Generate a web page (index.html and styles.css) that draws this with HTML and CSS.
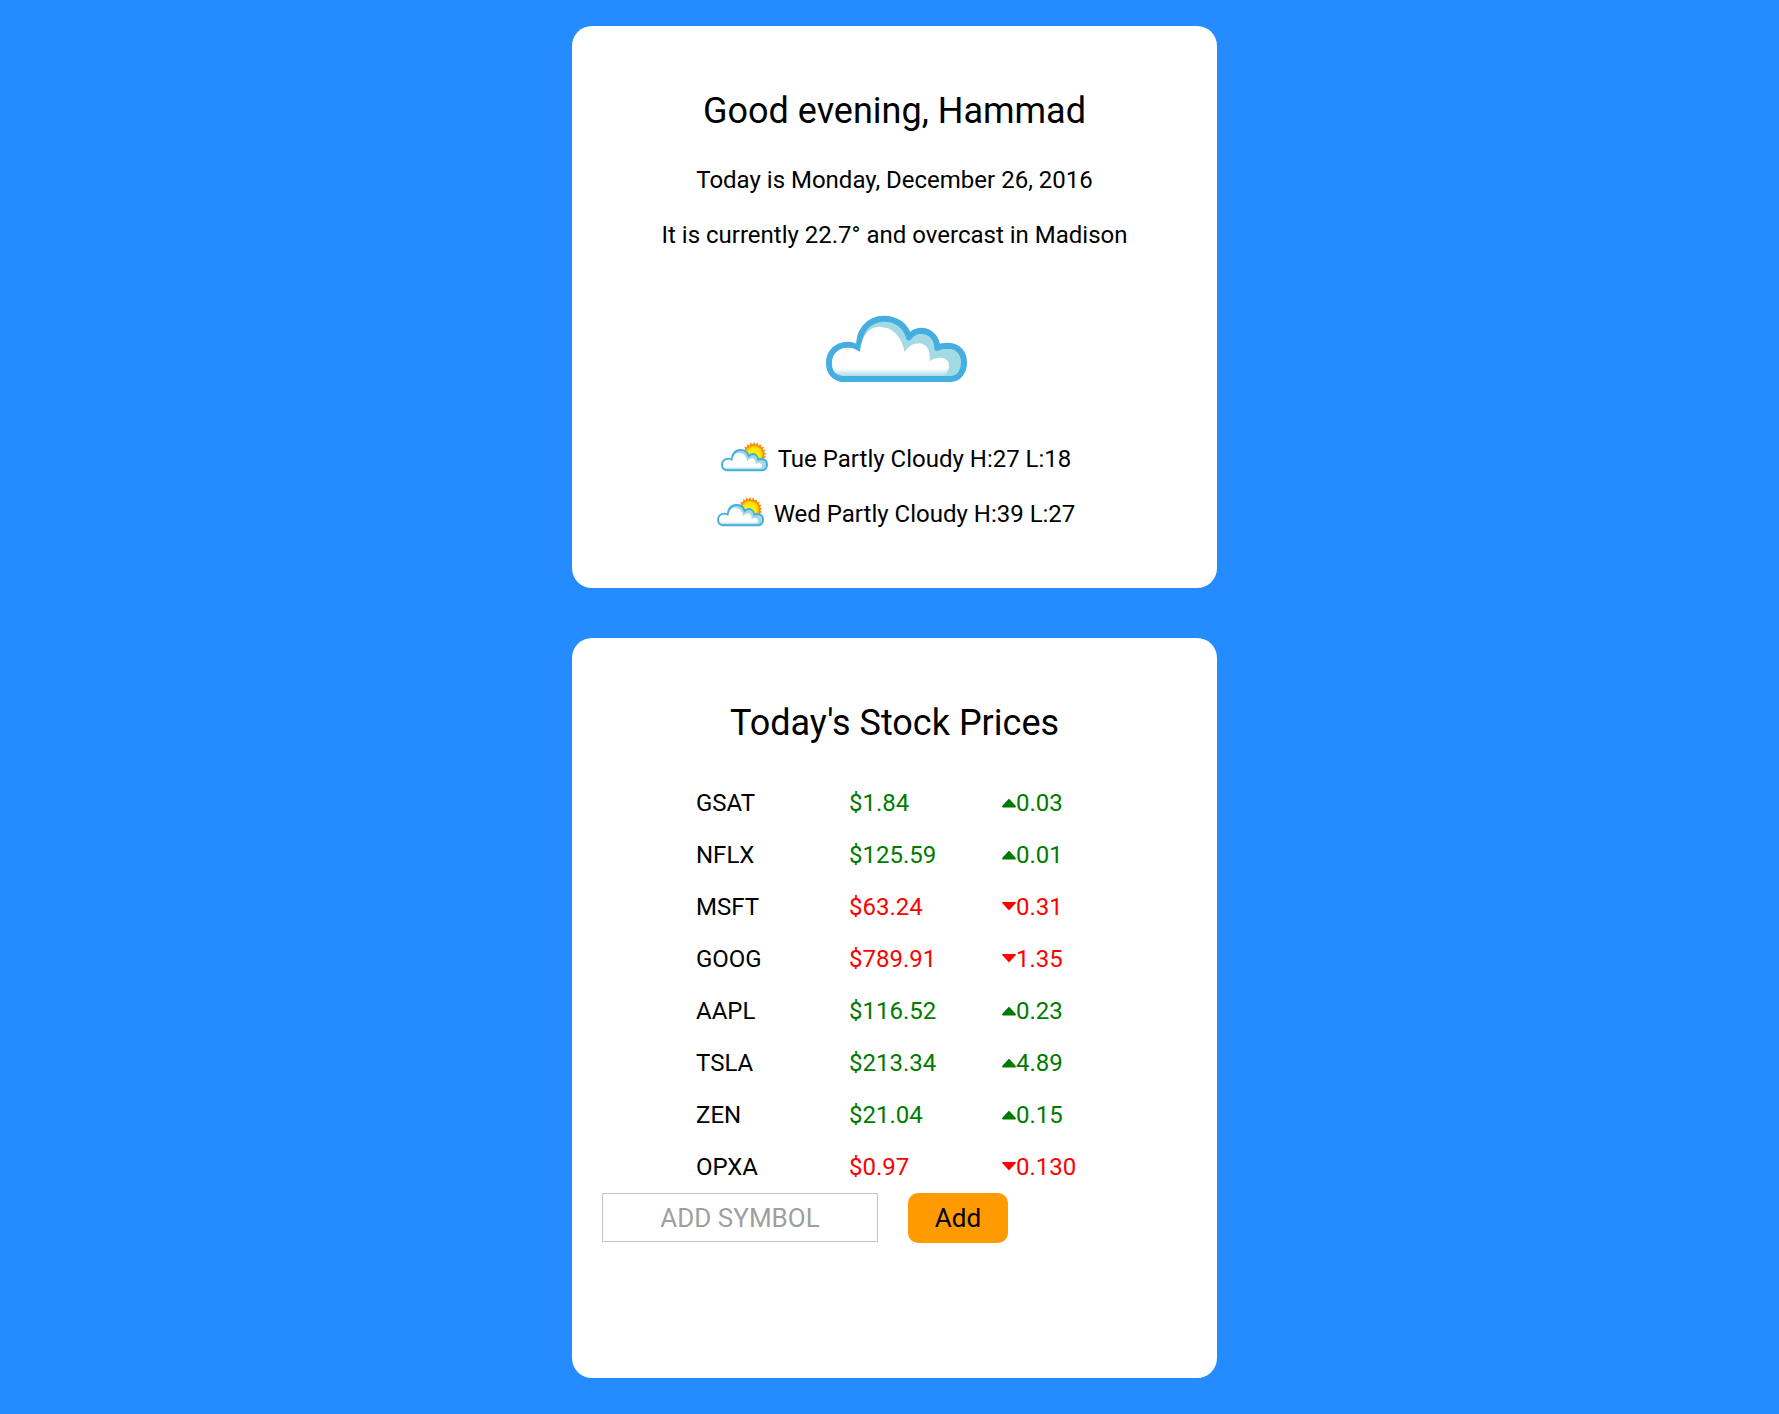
FILE: index.html
```html
<!DOCTYPE html>
<html lang="en">
<head>
<meta charset="utf-8">
<meta name="viewport" content="width=device-width, initial-scale=1">
<title>Dashboard</title>
<link rel="stylesheet" href="styles.css">
</head>
<body>
<svg class="sprite" aria-hidden="true">
  <defs>
    <linearGradient id="cloud-fade" gradientUnits="userSpaceOnUse" x1="0" y1="236" x2="0" y2="260">
      <stop offset="0" stop-color="#fff"/>
      <stop offset="1" stop-color="#fff" stop-opacity="0"/>
    </linearGradient>
    <radialGradient id="sun-fill">
      <stop offset="0.6" stop-color="#fff000"/>
      <stop offset="1" stop-color="#ffc400"/>
    </radialGradient>
    <g id="cloud">
      <path fill="#a3dae3" stroke="#45aee0" stroke-width="18" stroke-linejoin="round" d="M125 267C100 262 87 243 87 219C87 187 110 164 143 164C157 164 166 167 178 176C172 125 205 86 252 86C290 86 318 108 327 142C338 126 350 122 365 122C392 124 412 145 412 174C420 167 430 167 445 167C475 168 492 190 492 217C492 247 475 267 452 267Z"/>
      <path fill="url(#cloud-fade)" d="M125 259C105 255 96 240 96 219C96 190 118 173 145 173C160 173 168 178 180 186C183 150 200 110 240 110C280 112 305 140 314 186C325 168 340 160 358 160C380 162 392 180 389 213C400 205 410 203 420 203C437 203 447 213 447 225C447 244 438 259 415 259Z"/>
    </g>
    <path id="ray" d="M0-12.5L10.8 6.25H-10.8Z"/>
    <g id="partly-cloudy">
      <g transform="translate(36 12.5)">
        <g fill="#ff8a00">
          <use href="#ray"/>
          <use href="#ray" transform="rotate(17.14)"/>
          <use href="#ray" transform="rotate(34.29)"/>
          <use href="#ray" transform="rotate(51.43)"/>
          <use href="#ray" transform="rotate(68.57)"/>
          <use href="#ray" transform="rotate(85.71)"/>
          <use href="#ray" transform="rotate(102.86)"/>
        </g>
        <circle r="8.8" fill="url(#sun-fill)"/>
      </g>
      <use href="#cloud" transform="translate(-5.6 -1.5) scale(.111)"/>
    </g>
  </defs>
</svg>
<main class="dashboard">
  <section class="card">
    <h1 class="title">Good evening, Hammad</h1>
    <p class="line">Today is Monday, December 26, 2016</p>
    <p class="line">It is currently 22.7° and overcast in Madison</p>
    <svg class="weather-icon" viewBox="0 0 570 330" role="img" aria-label="Overcast"><use href="#cloud"/></svg>
    <ul class="forecast">
      <li class="forecast-day"><svg class="forecast-icon" viewBox="0 0 50 35" aria-hidden="true"><use href="#partly-cloudy"/></svg>Tue Partly Cloudy H:27 L:18</li>
      <li class="forecast-day"><svg class="forecast-icon" viewBox="0 0 50 35" aria-hidden="true"><use href="#partly-cloudy"/></svg>Wed Partly Cloudy H:39 L:27</li>
    </ul>
  </section>
  <section class="card">
    <h2 class="title">Today's Stock Prices</h2>
    <table class="stocks">
      <tbody>
        <tr><th scope="row">GSAT</th><td class="up">$1.84</td><td class="up change">0.03</td></tr>
        <tr><th scope="row">NFLX</th><td class="up">$125.59</td><td class="up change">0.01</td></tr>
        <tr><th scope="row">MSFT</th><td class="down">$63.24</td><td class="down change">0.31</td></tr>
        <tr><th scope="row">GOOG</th><td class="down">$789.91</td><td class="down change">1.35</td></tr>
        <tr><th scope="row">AAPL</th><td class="up">$116.52</td><td class="up change">0.23</td></tr>
        <tr><th scope="row">TSLA</th><td class="up">$213.34</td><td class="up change">4.89</td></tr>
        <tr><th scope="row">ZEN</th><td class="up">$21.04</td><td class="up change">0.15</td></tr>
        <tr><th scope="row">OPXA</th><td class="down">$0.97</td><td class="down change">0.130</td></tr>
      </tbody>
    </table>
    <form class="add-form">
      <input class="symbol-input" type="text" name="symbol" placeholder="ADD SYMBOL" aria-label="Add symbol">
      <button class="add-button" type="button">Add</button>
    </form>
  </section>
</main>
</body>
</html>
```
FILE: styles.css
```css
* {
  box-sizing: border-box;
}

body {
  margin: 0;
  background: #248cff;
  color: #000;
  font: 24px/31px Roboto, "Liberation Sans", sans-serif;
}

.sprite {
  position: absolute;
  width: 0;
  height: 0;
}

.dashboard {
  display: flex;
  flex-direction: column;
  align-items: center;
  gap: 50px;
  padding: 26px 0 36px 10px;
}

.card {
  width: 100%;
  max-width: 645px;
  padding: 64px 30px 46px;
  border-radius: 20px;
  background: #fff;
  text-align: center;
}

.title {
  margin: 0 0 33px;
  font-size: 36px;
  line-height: 42px;
  font-weight: 400;
}

.line {
  margin: 0 0 24px;
}

.weather-icon {
  display: block;
  width: 190px;
  height: 110px;
  margin: 39px auto 32px;
}

.forecast {
  margin: 0;
  padding: 0;
  list-style: none;
}

.forecast-day {
  display: flex;
  align-items: center;
  justify-content: center;
  gap: 10px;
  height: 55px;
}

.forecast-icon {
  width: 50px;
  height: 35px;
}

.stocks {
  width: 459px;
  margin: 33px 0 0 94px;
  border-collapse: collapse;
  table-layout: fixed;
  text-align: left;
}

.stocks th,
.stocks td {
  height: 52px;
  padding: 0;
  font-weight: 400;
}

.up {
  color: #007a00;
}

.down {
  color: #f00;
}

.change::before {
  content: "";
  display: inline-block;
  width: 14px;
  height: 9px;
  margin-bottom: 3px;
  background: currentColor;
  clip-path: polygon(50% 0, 100% 85%, 96% 100%, 4% 100%, 0 85%);
}

.down.change::before {
  margin-bottom: 4px;
  clip-path: polygon(4% 0, 96% 0, 100% 15%, 50% 100%, 0 15%);
}

.add-form {
  display: flex;
  align-items: flex-start;
  gap: 30px;
  margin-bottom: 89px;
}

.symbol-input {
  width: 276px;
  height: 49px;
  padding: 0 10px;
  border: 1px solid #c4c4c4;
  background: #fff;
  color: #000;
  font: inherit;
  font-size: 26px;
  text-align: center;
}

.symbol-input::placeholder {
  color: #9f9f9f;
  opacity: 1;
}

.add-button {
  width: 100px;
  height: 50px;
  padding: 0;
  border: 0;
  border-radius: 10px;
  background: #ff9b00;
  color: #000;
  font: inherit;
  font-size: 26px;
}
```
